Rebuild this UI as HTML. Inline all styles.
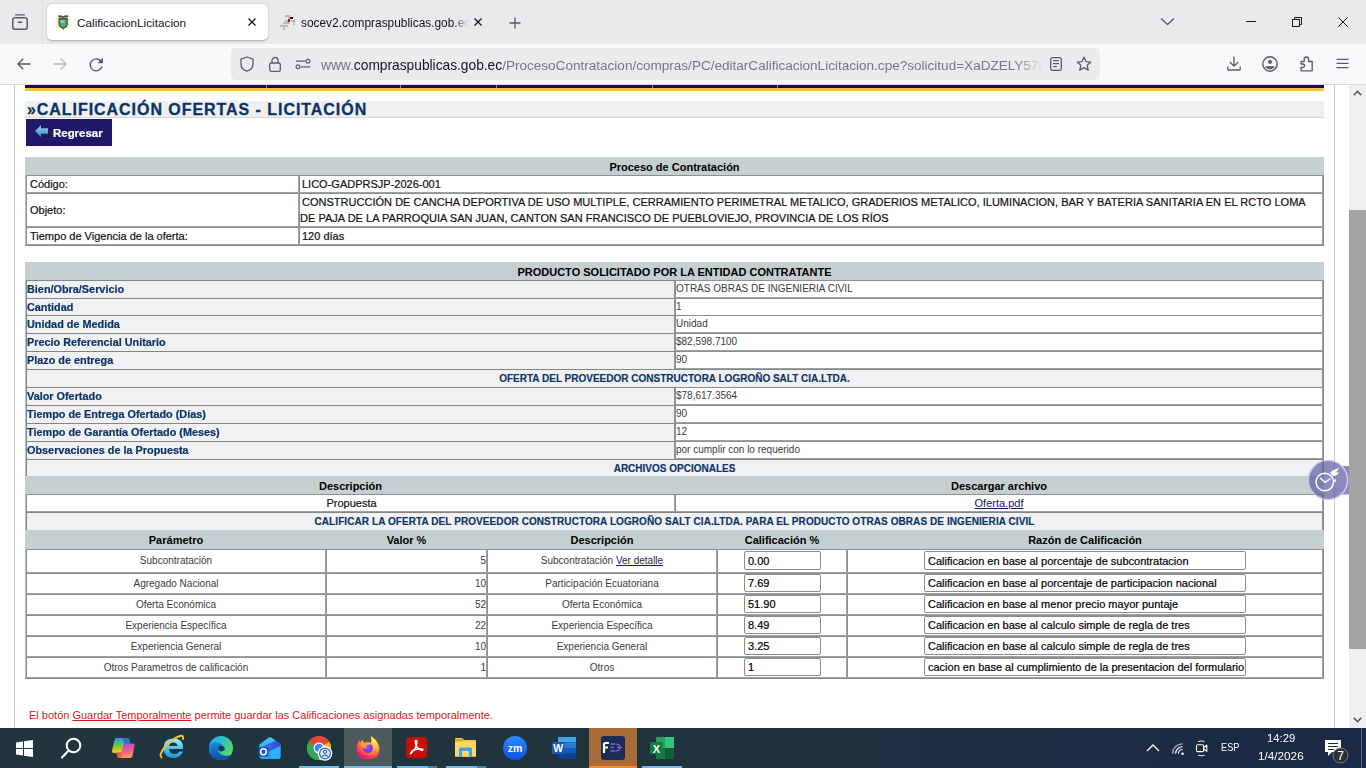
<!DOCTYPE html>
<html><head><meta charset="utf-8"><title>CalificacionLicitacion</title><style>*{margin:0;padding:0;box-sizing:border-box}
html,body{width:1366px;height:768px;overflow:hidden;background:#fff;font-family:"Liberation Sans",sans-serif;position:relative}
.a{position:absolute}
.t{white-space:nowrap}
svg{position:absolute;overflow:visible}
</style></head><body>
<div class="a" style="left:0px;top:0px;width:1366px;height:44px;background:#eaeaed"></div>
<div class="a" style="left:0px;top:44px;width:1366px;height:40px;background:#f9f9fb"></div>
<div class="a" style="left:0px;top:84px;width:1366px;height:1px;background:#d9d9dd"></div>
<div class="a" style="left:42px;top:0px;width:1px;height:44px;background:#dcdce0"></div>
<svg style="left:12px;top:13px" width="16" height="17" viewBox="0 0 16 17"><path d="M3.5 1.8h9" stroke="#5b5b66" stroke-width="1.3" fill="none" stroke-linecap="round"/><rect x="0.8" y="4.8" width="14.4" height="11.4" rx="2.2" stroke="#5b5b66" stroke-width="1.5" fill="none"/><path d="M6.3 9.2h3.4" stroke="#5b5b66" stroke-width="1.4" stroke-linecap="round"/></svg>
<div class="a" style="left:47px;top:4px;width:221px;height:36px;background:#fff;border-radius:5px;box-shadow:0 0.5px 2px rgba(0,0,0,.28)"></div>
<svg style="left:54px;top:10px" width="24" height="24" viewBox="54 10 24 24">
<rect x="56" y="17.5" width="14" height="11" rx="3" fill="#f6f0a0" opacity="0.75"/>
<path d="M57.5 16Q60 14.5 63 16.5Q66 14.5 68.8 16L67 17.5H59.5Z" fill="#4a4a4a"/>
<path d="M62.2 16.5H63.8V19H62.2Z" fill="#6a5030"/>
<path d="M58.5 19Q58.5 18 59.5 18H66.8Q67.8 18 67.8 19V24Q67.8 27.5 63.2 28.8Q58.5 27.5 58.5 24Z" fill="#5a4a2a"/>
<path d="M59.8 19.5H66.5V23.8Q66.5 26.5 63.2 27.5Q59.8 26.5 59.8 23.8Z" fill="#3fae9a"/>
<ellipse cx="62.5" cy="21.5" rx="2" ry="1.5" fill="#9ad8e0" opacity="0.8"/>
<path d="M62 28H64.5L63.2 30Z" fill="#a04a2a"/>
</svg>
<div class="a t " style="left:77px;top:14px;font-size:11.75px;color:#15141a;line-height:18px">CalificacionLicitacion</div>
<svg style="left:248px;top:18px" width="8" height="8" viewBox="0 0 8 8"><path d="M0.5 0.5L7.5 7.5M7.5 0.5L0.5 7.5" stroke="#15141a" stroke-width="1.3"/></svg>
<svg style="left:276px;top:10px" width="24" height="24" viewBox="276 10 24 24" shape-rendering="crispEdges">
<rect x="290" y="15" width="5" height="3" fill="#ece6b4"/>
<rect x="285" y="15" width="5" height="2" fill="#b9b9bb"/>
<rect x="290" y="17" width="3" height="2" fill="#1c1c38"/>
<rect x="288" y="17" width="2" height="2" fill="#b9b9bb"/>
<rect x="288" y="19" width="2" height="3" fill="#d00014"/>
<rect x="291" y="20" width="4" height="2" fill="#b9bdbd"/><rect x="293" y="20" width="2" height="5" fill="#b9bdbd"/>
<rect x="285" y="20" width="3" height="2" fill="#b9b9bb"/>
<rect x="283" y="22" width="7" height="2" fill="#b9b9bb"/>
<rect x="280" y="25" width="8" height="2" fill="#bdbdbd"/>
<rect x="283" y="27" width="2" height="3" fill="#bdbdbd"/>
</svg>
<div class="a t" style="left:301px;top:14px;width:168px;height:18px;overflow:hidden;font-size:11.9px;color:#15141a;line-height:18px;white-space:nowrap;-webkit-mask-image:linear-gradient(90deg,#000 90%,transparent)">socev2.compraspublicas.gob.ec/ProcesoContratacion</div>
<svg style="left:474px;top:18px" width="8" height="8" viewBox="0 0 8 8"><path d="M0.5 0.5L7.5 7.5M7.5 0.5L0.5 7.5" stroke="#15141a" stroke-width="1.3"/></svg>
<svg style="left:509px;top:17px" width="12" height="12" viewBox="0 0 12 12"><path d="M6 0.5V11.5M0.5 6H11.5" stroke="#5b5b66" stroke-width="1.3"/></svg>
<svg style="left:1160px;top:17px" width="15" height="9" viewBox="0 0 15 9"><path d="M1 1.5L7.5 7.5L14 1.5" stroke="#5b5b66" stroke-width="1.4" fill="none"/></svg>
<div class="a" style="left:1246px;top:21px;width:10px;height:1px;background:#1a1a1a"></div>
<svg style="left:1292px;top:17px" width="10" height="10" viewBox="0 0 10 10"><rect x="0.5" y="2.5" width="7" height="7" fill="none" stroke="#1a1a1a" stroke-width="1"/><path d="M2.5 2.5V0.5H9.5V7.5H7.5" fill="none" stroke="#1a1a1a" stroke-width="1"/></svg>
<svg style="left:1338px;top:17px" width="10" height="10" viewBox="0 0 10 10"><path d="M0.3 0.3L9.7 9.7M9.7 0.3L0.3 9.7" stroke="#1a1a1a" stroke-width="1"/></svg>
<svg style="left:17px;top:58px" width="14" height="12" viewBox="0 0 14 12"><path d="M13.5 6H1.2M6.2 0.8L1 6L6.2 11.2" stroke="#5b5b66" stroke-width="1.4" fill="none"/></svg>
<svg style="left:53px;top:58px" width="14" height="12" viewBox="0 0 14 12"><path d="M0.5 6H12.8M7.8 0.8L13 6L7.8 11.2" stroke="#b5b5bc" stroke-width="1.4" fill="none"/></svg>
<svg style="left:89px;top:57px" width="15" height="15" viewBox="0 0 15 15"><path d="M12.6 5.2A6 6 0 1 0 13 9.5" stroke="#5b5b66" stroke-width="1.4" fill="none"/><path d="M14 0.8V6.3H8.5Z" fill="#5b5b66"/></svg>
<div class="a" style="left:231px;top:48px;width:869px;height:32px;background:#ebebee;border-radius:5px"></div>
<svg style="left:240px;top:56px" width="14" height="16" viewBox="0 0 14 16"><path d="M7 1L13 3.2V8.2C13 11.6 10 14.2 7 15.2C4 14.2 1 11.6 1 8.2V3.2Z" stroke="#5b5b66" stroke-width="1.3" fill="none" stroke-linejoin="round"/></svg>
<svg style="left:269px;top:56px" width="12" height="16" viewBox="0 0 12 16"><path d="M3 7V4.5A3 3 0 0 1 9 4.5V7" stroke="#5b5b66" stroke-width="1.3" fill="none"/><rect x="0.7" y="7" width="10.6" height="8.3" rx="1.6" stroke="#5b5b66" stroke-width="1.3" fill="none"/></svg>
<svg style="left:295px;top:59px" width="16" height="10" viewBox="0 0 16 10"><path d="M1 2.2H10.5M6 7.8H15" stroke="#5b5b66" stroke-width="1.3"/><circle cx="13" cy="2.2" r="1.9" stroke="#5b5b66" stroke-width="1.2" fill="none"/><circle cx="3" cy="7.8" r="1.9" stroke="#5b5b66" stroke-width="1.2" fill="none"/></svg>
<div class="a t" style="left:321px;top:56px;width:722px;height:20px;overflow:hidden;font-size:13.75px;line-height:20px;white-space:nowrap;color:#76767c;-webkit-mask-image:linear-gradient(90deg,#000 96%,transparent)">www.<span style="color:#15141a">compraspublicas.gob.ec</span><span style="font-size:13.55px">/ProcesoContratacion/compras/PC/editarCalificacionLicitacion.cpe?solicitud=XaDZELY57lmdQ</span></div>
<svg style="left:1050px;top:57px" width="12" height="14" viewBox="0 0 12 14"><rect x="0.7" y="0.7" width="10.6" height="12.6" rx="1.8" stroke="#5b5b66" stroke-width="1.3" fill="none"/><path d="M3.5 3.6H8.5M3.5 6.6H8.5M3.5 9.6H6.5" stroke="#5b5b66" stroke-width="1.2" stroke-linecap="round"/></svg>
<svg style="left:1076px;top:56px" width="16" height="16" viewBox="0 0 16 16"><path d="M8 1.2L10 5.6L14.8 6.1L11.2 9.3L12.2 14.1L8 11.6L3.8 14.1L4.8 9.3L1.2 6.1L6 5.6Z" stroke="#5b5b66" stroke-width="1.3" fill="none" stroke-linejoin="round"/></svg>
<svg style="left:1227px;top:56px" width="14" height="15" viewBox="0 0 14 15"><path d="M7 0.5V10M2.8 6L7 10.2L11.2 6M0.8 10.5V13.2Q0.8 14 1.6 14H12.4Q13.2 14 13.2 13.2V10.5" stroke="#5b5b66" stroke-width="1.3" fill="none"/></svg>
<svg style="left:1262px;top:56px" width="16" height="16" viewBox="0 0 16 16"><circle cx="8" cy="8" r="7.2" stroke="#5b5b66" stroke-width="1.4" fill="none"/><circle cx="8" cy="6" r="2" fill="#5b5b66"/><path d="M3.6 10.3H12.4V11.6Q10.5 13.4 8 13.4Q5.5 13.4 3.6 11.6Z" fill="#5b5b66"/></svg>
<svg style="left:1300px;top:56px" width="14" height="16" viewBox="0 0 14 16"><path d="M1 5.5H4.2V3.2A2.2 2.2 0 0 1 8.6 3.2V5.5H12.2V14.8H1V11.5H3.2A1.8 1.8 0 0 0 3.2 8H1Z" stroke="#5b5b66" stroke-width="1.3" fill="none" stroke-linejoin="round"/></svg>
<svg style="left:1336px;top:58px" width="13" height="11" viewBox="0 0 13 11"><path d="M0.5 1.4H12.5M0.5 5.4H12.5M0.5 9.6H12.5" stroke="#5b5b66" stroke-width="1.3"/></svg>
<div class="a" style="left:14px;top:85px;width:1px;height:643px;background:#c6c6c6"></div>
<div class="a" style="left:1334px;top:85px;width:1px;height:643px;background:#c6c6c6"></div>
<div class="a" style="left:25px;top:85px;width:1299px;height:3px;background:#170f4f"></div>
<div class="a" style="left:25px;top:88px;width:1299px;height:3px;background:#f5c336"></div>
<div class="a" style="left:266px;top:85px;width:1px;height:3px;background:#8282c8"></div>
<div class="a" style="left:400px;top:85px;width:1px;height:3px;background:#8282c8"></div>
<div class="a" style="left:496px;top:85px;width:1px;height:3px;background:#8282c8"></div>
<div class="a" style="left:652px;top:85px;width:1px;height:3px;background:#8282c8"></div>
<div class="a" style="left:777px;top:85px;width:1px;height:3px;background:#8282c8"></div>
<div class="a" style="left:25px;top:101px;width:1299px;height:17px;background:#f0f0f2;border-bottom:1px solid #d4d4d8"></div>
<div class="a t " style="left:27px;top:100px;font-size:16px;font-weight:bold;color:#0b3463;line-height:20px;letter-spacing:0.95px;white-space:nowrap;-webkit-text-stroke:0.3px #0b3463">&raquo;CALIFICACI&Oacute;N OFERTAS - LICITACI&Oacute;N</div>
<div class="a" style="left:26px;top:119px;width:86px;height:27px;background:#1f1868"></div>
<svg style="left:35px;top:125px" width="13" height="12" viewBox="0 0 13 12"><defs><linearGradient id="ag" x1="0" y1="0" x2="0" y2="1"><stop offset="0" stop-color="#8fd0f0"/><stop offset="1" stop-color="#3b8fc0"/></linearGradient></defs><path d="M0 6L6 0V3.3H13V8.7H6V12Z" fill="url(#ag)"/></svg>
<div class="a t " style="left:53px;top:125px;font-size:10.6px;font-weight:bold;color:#fff;line-height:16px;transform:scaleX(1.08);transform-origin:0 0;-webkit-text-stroke:0.2px #fff">Regresar</div>
<div class="a" style="left:25px;top:157px;width:1299px;height:18px;background:#c5cfcf"></div>
<div class="a t " style="left:25px;top:158px;width:1299px;height:18px;text-align:center;font-size:11px;font-weight:bold;color:#000;line-height:18px;white-space:nowrap">Proceso de Contrataci&oacute;n</div>
<div class="a" style="left:25px;top:175px;width:1px;height:71px;background:#b8c0c0"></div>
<div class="a" style="left:1323px;top:175px;width:1px;height:71px;background:#868c8c"></div>
<div class="a" style="left:25px;top:245px;width:1299px;height:1px;background:#868c8c"></div>
<div class="a" style="left:26px;top:175px;width:273px;height:18px;background:#fff;border:1px solid #8a9191;border-right-color:#9ca2a2;border-bottom-color:#9ca2a2;"></div>
<div class="a" style="left:299px;top:175px;width:1024px;height:18px;background:#fff;border:1px solid #8a9191;border-right-color:#9ca2a2;border-bottom-color:#9ca2a2;"></div>
<div class="a t " style="left:30px;top:175px;height:18px;line-height:18px;font-size:11px;color:#111;white-space:nowrap;-webkit-text-stroke:0.2px #111">C&oacute;digo:</div>
<div class="a t " style="left:302px;top:175px;height:18px;line-height:18px;font-size:11px;color:#111;white-space:nowrap;-webkit-text-stroke:0.2px #111">LICO-GADPRSJP-2026-001</div>
<div class="a" style="left:26px;top:193px;width:273px;height:34px;background:#fff;border:1px solid #8a9191;border-right-color:#9ca2a2;border-bottom-color:#9ca2a2;"></div>
<div class="a" style="left:299px;top:193px;width:1024px;height:34px;background:#fff;border:1px solid #8a9191;border-right-color:#9ca2a2;border-bottom-color:#9ca2a2;"></div>
<div class="a t " style="left:30px;top:193px;height:34px;line-height:34px;font-size:11px;color:#111;white-space:nowrap;-webkit-text-stroke:0.2px #111">Objeto:</div>
<div class="a t " style="left:300px;top:194px;width:1020px;text-indent:2px;line-height:16px;font-size:11px;color:#111;white-space:normal;letter-spacing:0.02px;-webkit-text-stroke:0.2px #111">CONSTRUCCI&Oacute;N DE CANCHA DEPORTIVA DE USO MULTIPLE, CERRAMIENTO PERIMETRAL METALICO, GRADERIOS METALICO, ILUMINACION, BAR Y BATERIA SANITARIA EN EL RCTO LOMA DE PAJA DE LA PARROQUIA SAN JUAN, CANTON SAN FRANCISCO DE PUEBLOVIEJO, PROVINCIA DE LOS R&Iacute;OS</div>
<div class="a" style="left:26px;top:227px;width:273px;height:18px;background:#fff;border:1px solid #8a9191;border-right-color:#9ca2a2;border-bottom-color:#9ca2a2;"></div>
<div class="a" style="left:299px;top:227px;width:1024px;height:18px;background:#fff;border:1px solid #8a9191;border-right-color:#9ca2a2;border-bottom-color:#9ca2a2;"></div>
<div class="a t " style="left:30px;top:227px;height:18px;line-height:18px;font-size:11px;color:#111;white-space:nowrap;-webkit-text-stroke:0.2px #111">Tiempo de Vigencia de la oferta:</div>
<div class="a t " style="left:302px;top:227px;height:18px;line-height:18px;font-size:11px;color:#111;white-space:nowrap;-webkit-text-stroke:0.2px #111">120 d&iacute;as</div>
<div class="a" style="left:25px;top:262px;width:1299px;height:18px;background:#c5cfcf"></div>
<div class="a t " style="left:25px;top:263px;width:1299px;height:18px;text-align:center;font-size:11px;font-weight:bold;color:#000;line-height:18px;white-space:nowrap">PRODUCTO SOLICITADO POR LA ENTIDAD CONTRATANTE</div>
<div class="a" style="left:25px;top:280px;width:1px;height:399px;background:#b8c0c0"></div>
<div class="a" style="left:1323px;top:280px;width:1px;height:399px;background:#868c8c"></div>
<div class="a" style="left:26px;top:280px;width:649px;height:18px;background:#f1f1f3;border-top:1px solid #7f8787;border-left:1px solid #7f8787;border-right:1px solid #8f9393"></div>
<div class="a" style="left:675px;top:280px;width:648px;height:18px;background:#fff;border:1px solid #8a9191;border-right-color:#9ca2a2;border-bottom-color:#9ca2a2;"></div>
<div class="a t " style="left:27px;top:280px;height:18px;line-height:19px;font-size:10.2px;font-weight:bold;color:#0b3468;white-space:nowrap;transform:scaleX(1.065);transform-origin:0 0;-webkit-text-stroke:0.2px #0b3468">Bien/Obra/Servicio</div>
<div class="a t " style="left:676px;top:280px;height:18px;line-height:18px;font-size:10px;color:#3b3b3b;white-space:nowrap">OTRAS OBRAS DE INGENIERIA CIVIL</div>
<div class="a" style="left:26px;top:298px;width:649px;height:18px;background:#f1f1f3;border-top:1px solid #7f8787;border-left:1px solid #7f8787;border-right:1px solid #8f9393"></div>
<div class="a" style="left:675px;top:298px;width:648px;height:18px;background:#fff;border:1px solid #8a9191;border-right-color:#9ca2a2;border-bottom-color:#9ca2a2;"></div>
<div class="a t " style="left:27px;top:298px;height:18px;line-height:19px;font-size:10.2px;font-weight:bold;color:#0b3468;white-space:nowrap;transform:scaleX(1.065);transform-origin:0 0;-webkit-text-stroke:0.2px #0b3468">Cantidad</div>
<div class="a t " style="left:676px;top:298px;height:18px;line-height:18px;font-size:10px;color:#3b3b3b;white-space:nowrap">1</div>
<div class="a" style="left:26px;top:315px;width:649px;height:18px;background:#f1f1f3;border-top:1px solid #7f8787;border-left:1px solid #7f8787;border-right:1px solid #8f9393"></div>
<div class="a" style="left:675px;top:315px;width:648px;height:18px;background:#fff;border:1px solid #8a9191;border-right-color:#9ca2a2;border-bottom-color:#9ca2a2;"></div>
<div class="a t " style="left:27px;top:315px;height:18px;line-height:19px;font-size:10.2px;font-weight:bold;color:#0b3468;white-space:nowrap;transform:scaleX(1.065);transform-origin:0 0;-webkit-text-stroke:0.2px #0b3468">Unidad de Medida</div>
<div class="a t " style="left:676px;top:315px;height:18px;line-height:18px;font-size:10px;color:#3b3b3b;white-space:nowrap">Unidad</div>
<div class="a" style="left:26px;top:333px;width:649px;height:18px;background:#f1f1f3;border-top:1px solid #7f8787;border-left:1px solid #7f8787;border-right:1px solid #8f9393"></div>
<div class="a" style="left:675px;top:333px;width:648px;height:18px;background:#fff;border:1px solid #8a9191;border-right-color:#9ca2a2;border-bottom-color:#9ca2a2;"></div>
<div class="a t " style="left:27px;top:333px;height:18px;line-height:19px;font-size:10.2px;font-weight:bold;color:#0b3468;white-space:nowrap;transform:scaleX(1.065);transform-origin:0 0;-webkit-text-stroke:0.2px #0b3468">Precio Referencial Unitario</div>
<div class="a t " style="left:676px;top:333px;height:18px;line-height:18px;font-size:10px;color:#3b3b3b;white-space:nowrap">$82,598.7100</div>
<div class="a" style="left:26px;top:351px;width:649px;height:18px;background:#f1f1f3;border-top:1px solid #7f8787;border-left:1px solid #7f8787;border-right:1px solid #8f9393"></div>
<div class="a" style="left:675px;top:351px;width:648px;height:18px;background:#fff;border:1px solid #8a9191;border-right-color:#9ca2a2;border-bottom-color:#9ca2a2;"></div>
<div class="a t " style="left:27px;top:351px;height:18px;line-height:19px;font-size:10.2px;font-weight:bold;color:#0b3468;white-space:nowrap;transform:scaleX(1.065);transform-origin:0 0;-webkit-text-stroke:0.2px #0b3468">Plazo de entrega</div>
<div class="a t " style="left:676px;top:351px;height:18px;line-height:18px;font-size:10px;color:#3b3b3b;white-space:nowrap">90</div>
<div class="a" style="left:26px;top:369px;width:1297px;height:18px;background:#f1f1f3;border-top:1px solid #7f8787;border-left:1px solid #7f8787;border-right:1px solid #8f9393"></div>
<div class="a t " style="left:26px;top:370px;width:1297px;height:17px;line-height:17px;text-align:center;font-size:10px;font-weight:bold;color:#0b3468;white-space:nowrap;letter-spacing:0px;-webkit-text-stroke:0.15px #0b3468">OFERTA DEL PROVEEDOR CONSTRUCTORA LOGRO&Ntilde;O SALT CIA.LTDA.</div>
<div class="a" style="left:26px;top:387px;width:649px;height:18px;background:#f1f1f3;border-top:1px solid #7f8787;border-left:1px solid #7f8787;border-right:1px solid #8f9393"></div>
<div class="a" style="left:675px;top:387px;width:648px;height:18px;background:#fff;border:1px solid #8a9191;border-right-color:#9ca2a2;border-bottom-color:#9ca2a2;"></div>
<div class="a t " style="left:27px;top:387px;height:18px;line-height:19px;font-size:10.2px;font-weight:bold;color:#0b3468;white-space:nowrap;transform:scaleX(1.065);transform-origin:0 0;-webkit-text-stroke:0.2px #0b3468">Valor Ofertado</div>
<div class="a t " style="left:676px;top:387px;height:18px;line-height:18px;font-size:10px;color:#3b3b3b;white-space:nowrap">$78,617.3564</div>
<div class="a" style="left:26px;top:405px;width:649px;height:18px;background:#f1f1f3;border-top:1px solid #7f8787;border-left:1px solid #7f8787;border-right:1px solid #8f9393"></div>
<div class="a" style="left:675px;top:405px;width:648px;height:18px;background:#fff;border:1px solid #8a9191;border-right-color:#9ca2a2;border-bottom-color:#9ca2a2;"></div>
<div class="a t " style="left:27px;top:405px;height:18px;line-height:19px;font-size:10.2px;font-weight:bold;color:#0b3468;white-space:nowrap;transform:scaleX(1.065);transform-origin:0 0;-webkit-text-stroke:0.2px #0b3468">Tiempo de Entrega Ofertado (D&iacute;as)</div>
<div class="a t " style="left:676px;top:405px;height:18px;line-height:18px;font-size:10px;color:#3b3b3b;white-space:nowrap">90</div>
<div class="a" style="left:26px;top:423px;width:649px;height:18px;background:#f1f1f3;border-top:1px solid #7f8787;border-left:1px solid #7f8787;border-right:1px solid #8f9393"></div>
<div class="a" style="left:675px;top:423px;width:648px;height:18px;background:#fff;border:1px solid #8a9191;border-right-color:#9ca2a2;border-bottom-color:#9ca2a2;"></div>
<div class="a t " style="left:27px;top:423px;height:18px;line-height:19px;font-size:10.2px;font-weight:bold;color:#0b3468;white-space:nowrap;transform:scaleX(1.065);transform-origin:0 0;-webkit-text-stroke:0.2px #0b3468">Tiempo de Garant&iacute;a Ofertado (Meses)</div>
<div class="a t " style="left:676px;top:423px;height:18px;line-height:18px;font-size:10px;color:#3b3b3b;white-space:nowrap">12</div>
<div class="a" style="left:26px;top:441px;width:649px;height:18px;background:#f1f1f3;border-top:1px solid #7f8787;border-left:1px solid #7f8787;border-right:1px solid #8f9393"></div>
<div class="a" style="left:675px;top:441px;width:648px;height:18px;background:#fff;border:1px solid #8a9191;border-right-color:#9ca2a2;border-bottom-color:#9ca2a2;"></div>
<div class="a t " style="left:27px;top:441px;height:18px;line-height:19px;font-size:10.2px;font-weight:bold;color:#0b3468;white-space:nowrap;transform:scaleX(1.065);transform-origin:0 0;-webkit-text-stroke:0.2px #0b3468">Observaciones de la Propuesta</div>
<div class="a t " style="left:676px;top:441px;height:18px;line-height:18px;font-size:10px;color:#3b3b3b;white-space:nowrap">por cumplir con lo requerido</div>
<div class="a" style="left:26px;top:459px;width:1297px;height:17px;background:#f1f1f3;border-top:1px solid #7f8787;border-left:1px solid #7f8787;border-right:1px solid #8f9393"></div>
<div class="a t " style="left:26px;top:460px;width:1297px;height:16px;line-height:17px;text-align:center;font-size:10px;font-weight:bold;color:#0b3468;white-space:nowrap;letter-spacing:0px;-webkit-text-stroke:0.15px #0b3468">ARCHIVOS OPCIONALES</div>
<div class="a" style="left:25px;top:476px;width:1299px;height:18px;background:#c5cfcf"></div>
<div class="a t " style="left:26px;top:477px;width:649px;height:18px;line-height:18px;text-align:center;font-size:11px;font-weight:bold;color:#000">Descripci&oacute;n</div>
<div class="a t " style="left:675px;top:477px;width:648px;height:18px;line-height:18px;text-align:center;font-size:11px;font-weight:bold;color:#000">Descargar archivo</div>
<div class="a" style="left:26px;top:494px;width:649px;height:18px;background:#fff;border:1px solid #8a9191;border-right-color:#9ca2a2;border-bottom-color:#9ca2a2;"></div>
<div class="a" style="left:675px;top:494px;width:648px;height:18px;background:#fff;border:1px solid #8a9191;border-right-color:#9ca2a2;border-bottom-color:#9ca2a2;"></div>
<div class="a t " style="left:27px;top:494px;width:649px;height:18px;line-height:18px;text-align:center;font-size:11px;color:#111;-webkit-text-stroke:0.2px #111">Propuesta</div>
<div class="a t " style="left:675px;top:494px;width:648px;height:18px;line-height:18px;text-align:center;font-size:11px;color:#16165a"><span style="text-decoration:underline">Oferta.pdf</span></div>
<div class="a" style="left:26px;top:512px;width:1297px;height:18px;background:#f1f1f3;border-top:1px solid #7f8787;border-left:1px solid #7f8787;border-right:1px solid #8f9393"></div>
<div class="a t " style="left:26px;top:513px;width:1297px;height:17px;line-height:17px;text-align:center;font-size:10px;font-weight:bold;color:#0b3468;white-space:nowrap;letter-spacing:0.08px;-webkit-text-stroke:0.15px #0b3468">CALIFICAR LA OFERTA DEL PROVEEDOR CONSTRUCTORA LOGRO&Ntilde;O SALT CIA.LTDA. PARA EL PRODUCTO OTRAS OBRAS DE INGENIERIA CIVIL</div>
<div class="a" style="left:25px;top:530px;width:1299px;height:19px;background:#c5cfcf"></div>
<div class="a t " style="left:26px;top:531px;width:300px;height:19px;line-height:19px;text-align:center;font-size:11px;font-weight:bold;color:#000">Par&aacute;metro</div>
<div class="a t " style="left:326px;top:531px;width:161px;height:19px;line-height:19px;text-align:center;font-size:11px;font-weight:bold;color:#000">Valor %</div>
<div class="a t " style="left:487px;top:531px;width:230px;height:19px;line-height:19px;text-align:center;font-size:11px;font-weight:bold;color:#000">Descripci&oacute;n</div>
<div class="a t " style="left:717px;top:531px;width:130px;height:19px;line-height:19px;text-align:center;font-size:11px;font-weight:bold;color:#000">Calificaci&oacute;n %</div>
<div class="a t " style="left:847px;top:531px;width:476px;height:19px;line-height:19px;text-align:center;font-size:11px;font-weight:bold;color:#000">Raz&oacute;n de Calificaci&oacute;n</div>
<div class="a" style="left:26px;top:549px;width:300px;height:24px;background:#fff;border:1px solid #8a9191;border-right-color:#9ca2a2;border-bottom-color:#9ca2a2;"></div>
<div class="a" style="left:326px;top:549px;width:161px;height:24px;background:#fff;border:1px solid #8a9191;border-right-color:#9ca2a2;border-bottom-color:#9ca2a2;"></div>
<div class="a" style="left:487px;top:549px;width:230px;height:24px;background:#fff;border:1px solid #8a9191;border-right-color:#9ca2a2;border-bottom-color:#9ca2a2;"></div>
<div class="a" style="left:717px;top:549px;width:130px;height:24px;background:#fff;border:1px solid #8a9191;border-right-color:#9ca2a2;border-bottom-color:#9ca2a2;"></div>
<div class="a" style="left:847px;top:549px;width:476px;height:24px;background:#fff;border:1px solid #8a9191;border-right-color:#9ca2a2;border-bottom-color:#9ca2a2;"></div>
<div class="a t " style="left:26px;top:549px;width:300px;height:24px;line-height:24px;text-align:center;font-size:10px;color:#3b3b3b;white-space:nowrap">Subcontrataci&oacute;n</div>
<div class="a t " style="left:326px;top:549px;width:160px;height:24px;line-height:24px;text-align:right;font-size:10px;color:#3b3b3b;white-space:nowrap">5</div>
<div class="a t " style="left:487px;top:549px;width:230px;height:24px;line-height:24px;text-align:center;font-size:10px;color:#3b3b3b;white-space:nowrap">Subcontrataci&oacute;n <span style="color:#1c1c6c;text-decoration:underline">Ver detalle</span></div>
<div class="a" style="left:744px;top:551px;width:77px;height:19px;background:#fff;border:1px solid #8b8b90;border-radius:2px"></div>
<div class="a t " style="left:748px;top:552px;height:18px;line-height:18px;font-size:11px;color:#000;white-space:nowrap;-webkit-text-stroke:0.2px #000">0.00</div>
<div class="a" style="left:924px;top:551px;width:322px;height:19px;background:#fff;border:1px solid #8b8b90;border-radius:2px"></div>
<div class="a t " style="left:928px;top:552px;height:18px;line-height:18px;font-size:11px;color:#000;white-space:nowrap;-webkit-text-stroke:0.2px #000">Calificacion en base al porcentaje de subcontratacion</div>
<div class="a" style="left:26px;top:573px;width:300px;height:21px;background:#fff;border:1px solid #8a9191;border-right-color:#9ca2a2;border-bottom-color:#9ca2a2;"></div>
<div class="a" style="left:326px;top:573px;width:161px;height:21px;background:#fff;border:1px solid #8a9191;border-right-color:#9ca2a2;border-bottom-color:#9ca2a2;"></div>
<div class="a" style="left:487px;top:573px;width:230px;height:21px;background:#fff;border:1px solid #8a9191;border-right-color:#9ca2a2;border-bottom-color:#9ca2a2;"></div>
<div class="a" style="left:717px;top:573px;width:130px;height:21px;background:#fff;border:1px solid #8a9191;border-right-color:#9ca2a2;border-bottom-color:#9ca2a2;"></div>
<div class="a" style="left:847px;top:573px;width:476px;height:21px;background:#fff;border:1px solid #8a9191;border-right-color:#9ca2a2;border-bottom-color:#9ca2a2;"></div>
<div class="a t " style="left:26px;top:573px;width:300px;height:21px;line-height:21px;text-align:center;font-size:10px;color:#3b3b3b;white-space:nowrap">Agregado Nacional</div>
<div class="a t " style="left:326px;top:573px;width:160px;height:21px;line-height:21px;text-align:right;font-size:10px;color:#3b3b3b;white-space:nowrap">10</div>
<div class="a t " style="left:487px;top:573px;width:230px;height:21px;line-height:21px;text-align:center;font-size:10px;color:#3b3b3b;white-space:nowrap">Participaci&oacute;n Ecuatoriana</div>
<div class="a" style="left:744px;top:574px;width:77px;height:18px;background:#fff;border:1px solid #8b8b90;border-radius:2px"></div>
<div class="a t " style="left:748px;top:574px;height:18px;line-height:18px;font-size:11px;color:#000;white-space:nowrap;-webkit-text-stroke:0.2px #000">7.69</div>
<div class="a" style="left:924px;top:574px;width:322px;height:18px;background:#fff;border:1px solid #8b8b90;border-radius:2px"></div>
<div class="a t " style="left:928px;top:574px;height:18px;line-height:18px;font-size:11px;color:#000;white-space:nowrap;-webkit-text-stroke:0.2px #000">Calificacion en base al porcentaje de participacion nacional</div>
<div class="a" style="left:26px;top:594px;width:300px;height:21px;background:#fff;border:1px solid #8a9191;border-right-color:#9ca2a2;border-bottom-color:#9ca2a2;"></div>
<div class="a" style="left:326px;top:594px;width:161px;height:21px;background:#fff;border:1px solid #8a9191;border-right-color:#9ca2a2;border-bottom-color:#9ca2a2;"></div>
<div class="a" style="left:487px;top:594px;width:230px;height:21px;background:#fff;border:1px solid #8a9191;border-right-color:#9ca2a2;border-bottom-color:#9ca2a2;"></div>
<div class="a" style="left:717px;top:594px;width:130px;height:21px;background:#fff;border:1px solid #8a9191;border-right-color:#9ca2a2;border-bottom-color:#9ca2a2;"></div>
<div class="a" style="left:847px;top:594px;width:476px;height:21px;background:#fff;border:1px solid #8a9191;border-right-color:#9ca2a2;border-bottom-color:#9ca2a2;"></div>
<div class="a t " style="left:26px;top:594px;width:300px;height:21px;line-height:21px;text-align:center;font-size:10px;color:#3b3b3b;white-space:nowrap">Oferta Econ&oacute;mica</div>
<div class="a t " style="left:326px;top:594px;width:160px;height:21px;line-height:21px;text-align:right;font-size:10px;color:#3b3b3b;white-space:nowrap">52</div>
<div class="a t " style="left:487px;top:594px;width:230px;height:21px;line-height:21px;text-align:center;font-size:10px;color:#3b3b3b;white-space:nowrap">Oferta Econ&oacute;mica</div>
<div class="a" style="left:744px;top:595px;width:77px;height:18px;background:#fff;border:1px solid #8b8b90;border-radius:2px"></div>
<div class="a t " style="left:748px;top:595px;height:18px;line-height:18px;font-size:11px;color:#000;white-space:nowrap;-webkit-text-stroke:0.2px #000">51.90</div>
<div class="a" style="left:924px;top:595px;width:322px;height:18px;background:#fff;border:1px solid #8b8b90;border-radius:2px"></div>
<div class="a t " style="left:928px;top:595px;height:18px;line-height:18px;font-size:11px;color:#000;white-space:nowrap;-webkit-text-stroke:0.2px #000">Calificacion en base al menor precio mayor puntaje</div>
<div class="a" style="left:26px;top:615px;width:300px;height:21px;background:#fff;border:1px solid #8a9191;border-right-color:#9ca2a2;border-bottom-color:#9ca2a2;"></div>
<div class="a" style="left:326px;top:615px;width:161px;height:21px;background:#fff;border:1px solid #8a9191;border-right-color:#9ca2a2;border-bottom-color:#9ca2a2;"></div>
<div class="a" style="left:487px;top:615px;width:230px;height:21px;background:#fff;border:1px solid #8a9191;border-right-color:#9ca2a2;border-bottom-color:#9ca2a2;"></div>
<div class="a" style="left:717px;top:615px;width:130px;height:21px;background:#fff;border:1px solid #8a9191;border-right-color:#9ca2a2;border-bottom-color:#9ca2a2;"></div>
<div class="a" style="left:847px;top:615px;width:476px;height:21px;background:#fff;border:1px solid #8a9191;border-right-color:#9ca2a2;border-bottom-color:#9ca2a2;"></div>
<div class="a t " style="left:26px;top:615px;width:300px;height:21px;line-height:21px;text-align:center;font-size:10px;color:#3b3b3b;white-space:nowrap">Experiencia Espec&iacute;fica</div>
<div class="a t " style="left:326px;top:615px;width:160px;height:21px;line-height:21px;text-align:right;font-size:10px;color:#3b3b3b;white-space:nowrap">22</div>
<div class="a t " style="left:487px;top:615px;width:230px;height:21px;line-height:21px;text-align:center;font-size:10px;color:#3b3b3b;white-space:nowrap">Experiencia Espec&iacute;fica</div>
<div class="a" style="left:744px;top:616px;width:77px;height:18px;background:#fff;border:1px solid #8b8b90;border-radius:2px"></div>
<div class="a t " style="left:748px;top:616px;height:18px;line-height:18px;font-size:11px;color:#000;white-space:nowrap;-webkit-text-stroke:0.2px #000">8.49</div>
<div class="a" style="left:924px;top:616px;width:322px;height:18px;background:#fff;border:1px solid #8b8b90;border-radius:2px"></div>
<div class="a t " style="left:928px;top:616px;height:18px;line-height:18px;font-size:11px;color:#000;white-space:nowrap;-webkit-text-stroke:0.2px #000">Calificacion en base al calculo simple de regla de tres</div>
<div class="a" style="left:26px;top:636px;width:300px;height:21px;background:#fff;border:1px solid #8a9191;border-right-color:#9ca2a2;border-bottom-color:#9ca2a2;"></div>
<div class="a" style="left:326px;top:636px;width:161px;height:21px;background:#fff;border:1px solid #8a9191;border-right-color:#9ca2a2;border-bottom-color:#9ca2a2;"></div>
<div class="a" style="left:487px;top:636px;width:230px;height:21px;background:#fff;border:1px solid #8a9191;border-right-color:#9ca2a2;border-bottom-color:#9ca2a2;"></div>
<div class="a" style="left:717px;top:636px;width:130px;height:21px;background:#fff;border:1px solid #8a9191;border-right-color:#9ca2a2;border-bottom-color:#9ca2a2;"></div>
<div class="a" style="left:847px;top:636px;width:476px;height:21px;background:#fff;border:1px solid #8a9191;border-right-color:#9ca2a2;border-bottom-color:#9ca2a2;"></div>
<div class="a t " style="left:26px;top:636px;width:300px;height:21px;line-height:21px;text-align:center;font-size:10px;color:#3b3b3b;white-space:nowrap">Experiencia General</div>
<div class="a t " style="left:326px;top:636px;width:160px;height:21px;line-height:21px;text-align:right;font-size:10px;color:#3b3b3b;white-space:nowrap">10</div>
<div class="a t " style="left:487px;top:636px;width:230px;height:21px;line-height:21px;text-align:center;font-size:10px;color:#3b3b3b;white-space:nowrap">Experiencia General</div>
<div class="a" style="left:744px;top:637px;width:77px;height:18px;background:#fff;border:1px solid #8b8b90;border-radius:2px"></div>
<div class="a t " style="left:748px;top:637px;height:18px;line-height:18px;font-size:11px;color:#000;white-space:nowrap;-webkit-text-stroke:0.2px #000">3.25</div>
<div class="a" style="left:924px;top:637px;width:322px;height:18px;background:#fff;border:1px solid #8b8b90;border-radius:2px"></div>
<div class="a t " style="left:928px;top:637px;height:18px;line-height:18px;font-size:11px;color:#000;white-space:nowrap;-webkit-text-stroke:0.2px #000">Calificacion en base al calculo simple de regla de tres</div>
<div class="a" style="left:26px;top:657px;width:300px;height:21px;background:#fff;border:1px solid #8a9191;border-right-color:#9ca2a2;border-bottom-color:#9ca2a2;"></div>
<div class="a" style="left:326px;top:657px;width:161px;height:21px;background:#fff;border:1px solid #8a9191;border-right-color:#9ca2a2;border-bottom-color:#9ca2a2;"></div>
<div class="a" style="left:487px;top:657px;width:230px;height:21px;background:#fff;border:1px solid #8a9191;border-right-color:#9ca2a2;border-bottom-color:#9ca2a2;"></div>
<div class="a" style="left:717px;top:657px;width:130px;height:21px;background:#fff;border:1px solid #8a9191;border-right-color:#9ca2a2;border-bottom-color:#9ca2a2;"></div>
<div class="a" style="left:847px;top:657px;width:476px;height:21px;background:#fff;border:1px solid #8a9191;border-right-color:#9ca2a2;border-bottom-color:#9ca2a2;"></div>
<div class="a t " style="left:26px;top:657px;width:300px;height:21px;line-height:21px;text-align:center;font-size:10px;color:#3b3b3b;white-space:nowrap">Otros Parametros de calificaci&oacute;n</div>
<div class="a t " style="left:326px;top:657px;width:160px;height:21px;line-height:21px;text-align:right;font-size:10px;color:#3b3b3b;white-space:nowrap">1</div>
<div class="a t " style="left:487px;top:657px;width:230px;height:21px;line-height:21px;text-align:center;font-size:10px;color:#3b3b3b;white-space:nowrap">Otros</div>
<div class="a" style="left:744px;top:658px;width:77px;height:18px;background:#fff;border:1px solid #8b8b90;border-radius:2px"></div>
<div class="a t " style="left:748px;top:658px;height:18px;line-height:18px;font-size:11px;color:#000;white-space:nowrap;-webkit-text-stroke:0.2px #000">1</div>
<div class="a" style="left:924px;top:658px;width:322px;height:18px;background:#fff;border:1px solid #8b8b90;border-radius:2px"></div>
<div class="a t " style="left:928px;top:658px;height:18px;line-height:18px;font-size:11px;color:#000;white-space:nowrap;-webkit-text-stroke:0.2px #000">cacion en base al cumplimiento de la presentacion del formulario</div>
<div class="a" style="left:25px;top:678px;width:1299px;height:1px;background:#868c8c"></div>
<div class="a t " style="left:29px;top:707px;font-size:11px;line-height:16px;color:#d41a1a;white-space:nowrap">El bot&oacute;n <span style="text-decoration:underline">Guardar Temporalmente</span> permite guardar las Calificaciones asignadas temporalmente.</div>
<svg style="left:1300px;top:455px" width="50" height="50" viewBox="0 0 50 50">
<g opacity="0.72"><path d="M27 11H49V39.5H27Z" fill="#5f5fa8"/>
<circle cx="28" cy="25" r="19.6" fill="#5f5fa8" stroke="#c0c0d8" stroke-width="1.4"/></g>
<circle cx="24.8" cy="27" r="8.8" fill="none" stroke="#fff" stroke-width="1.5"/>
<path d="M20.5 23.2L25 27.3L30 24" stroke="#fff" stroke-width="1.4" fill="none" stroke-linecap="round"/>
<path d="M30 17.5Q34 14.5 39 12.8Q38 16 35 17.5Q38 17.2 39 17.5Q37 21 33 21Q31.5 19 30 17.5Z" fill="#fff"/>
<path d="M35.5 23.5Q36.5 25 35 28L34 25.5Z" fill="#fff"/>
</svg>
<div class="a" style="left:1349px;top:85px;width:17px;height:643px;background:#f0f0f0"></div>
<div class="a" style="left:1349px;top:210px;width:17px;height:439px;background:#a3a3a3"></div>
<svg style="left:1353px;top:90px" width="9" height="6" viewBox="0 0 9 6"><path d="M0.8 5.2L4.5 1.3L8.2 5.2" stroke="#505050" stroke-width="1.6" fill="none"/></svg>
<svg style="left:1353px;top:717px" width="9" height="6" viewBox="0 0 9 6"><path d="M0.8 0.8L4.5 4.7L8.2 0.8" stroke="#505050" stroke-width="1.6" fill="none"/></svg>
<div class="a" style="left:0;top:728px;width:1366px;height:40px;background:linear-gradient(90deg,#21353e 0%,#20343d 45%,#1d2d42 75%,#1b2946 100%)"></div>
<div class="a" style="left:344px;top:728px;width:48px;height:40px;background:#4c595d"></div>
<div class="a" style="left:589px;top:728px;width:48px;height:40px;background:#a76a39"></div>
<div class="a" style="left:299px;top:766px;width:40px;height:2px;background:#7ab8e8"></div>
<div class="a" style="left:344px;top:766px;width:48px;height:2px;background:#7ab8e8"></div>
<div class="a" style="left:397px;top:766px;width:31px;height:2px;background:#7ab8e8"></div>
<div class="a" style="left:428px;top:766px;width:9px;height:2px;background:#4f7fa8"></div>
<div class="a" style="left:446px;top:766px;width:31px;height:2px;background:#7ab8e8"></div>
<div class="a" style="left:477px;top:766px;width:9px;height:2px;background:#4f7fa8"></div>
<div class="a" style="left:589px;top:766px;width:48px;height:2px;background:#ff8a14"></div>
<div class="a" style="left:642px;top:766px;width:40px;height:2px;background:#7ab8e8"></div>
<svg style="left:16px;top:740px" width="17" height="17" viewBox="0 0 17 17"><path d="M0 2.4L7 1.4V8H0Z M8 1.2L17 0V8H8Z M0 9H7V15.6L0 14.6Z M8 9H17V17L8 15.8Z" fill="#fff"/></svg>
<svg style="left:61px;top:737px" width="21" height="22" viewBox="0 0 21 22"><circle cx="12.5" cy="8.5" r="6.8" stroke="#fff" stroke-width="2" fill="none"/><path d="M7.6 13.6L1 20.4" stroke="#fff" stroke-width="2.2" stroke-linecap="round"/></svg>
<svg style="left:111px;top:737px" width="24" height="22" viewBox="0 0 24 22"><defs>
<linearGradient id="cp1" x1="0" y1="0" x2="0" y2="1"><stop offset="0" stop-color="#1f9cf0"/><stop offset="0.55" stop-color="#7cc63a"/><stop offset="0.9" stop-color="#f2c614"/></linearGradient>
<linearGradient id="cp2" x1="0.3" y1="0" x2="0.6" y2="1"><stop offset="0" stop-color="#a84ee0"/><stop offset="0.5" stop-color="#ee5a9a"/><stop offset="1" stop-color="#ff9a50"/></linearGradient></defs>
<path d="M5 1H16Q18 1 18.5 3L19 6.5H13.5L11 14.5Q10.5 16 8.5 16H3Q0.5 16 1 13.5L3.5 3Q4 1 5 1Z" fill="url(#cp1)"/>
<path d="M11 1H16Q18 1 18.5 3L19 6.5H13.5Z" fill="#2a6ee0"/>
<path d="M8.5 21H19Q21 21 21.5 19L23.5 8.5Q24 6.5 21.5 6.5H15.5Q13.5 6.5 13 8.5L10.5 15.5H5.5L6 18.5Q6.5 21 8.5 21Z" fill="url(#cp2)"/>
<path d="M5.5 15.5H10.5L9.5 21H8.5Q6.5 21 6 18.5Z" fill="#f05a3a"/>
</svg>
<svg style="left:158px;top:734px" width="28" height="26" viewBox="0 0 28 26"><defs><linearGradient id="ie" x1="0" y1="0" x2="0" y2="1"><stop offset="0" stop-color="#a0ecff"/><stop offset="0.6" stop-color="#3cc0f0"/><stop offset="1" stop-color="#1a90d8"/></linearGradient></defs>
<path d="M25 15H11Q11.5 20 16.5 20Q19.5 20 21.5 17.5H25Q22.5 24 16 24Q6 24 5.5 14.5Q5.5 4.5 15.5 4.5Q25 4.5 25 13.5Z M11 12H19.5Q19 8.5 15.3 8.5Q11.6 8.5 11 12Z" fill="url(#ie)"/>
<path d="M3.5 23.5Q0.5 21 7 13Q15 4 22 2Q26 1 25 5" stroke="#e8c232" stroke-width="2" fill="none" stroke-linecap="round"/>
</svg>
<svg style="left:209px;top:736px" width="24" height="24" viewBox="0 0 24 24"><defs>
<linearGradient id="ed1" x1="0" y1="0" x2="1" y2="0.6"><stop offset="0" stop-color="#2aa8e8"/><stop offset="0.5" stop-color="#30c0c8"/><stop offset="1" stop-color="#5ade58"/></linearGradient>
<linearGradient id="ed2" x1="0" y1="0" x2="0.3" y2="1"><stop offset="0" stop-color="#1a8ee0"/><stop offset="1" stop-color="#0e4fa8"/></linearGradient></defs>
<circle cx="12" cy="12" r="12" fill="url(#ed1)"/>
<path d="M0.3 10.5Q2 6.5 7 6.3Q12 6.3 13 9.5Q9.5 9 9 13Q9 18 15 19.5Q19.5 20.5 22.5 18.5Q19.5 24 12 24Q0 24 0 12Z" fill="url(#ed2)"/>
<path d="M13 9.5Q9.5 9 9.2 12.8Q9.5 15.5 12.5 15.5Q15 15.3 16 13Q15.5 10 13 9.5Z" fill="#143a5a"/>
</svg>
<svg style="left:258px;top:736px" width="24" height="24" viewBox="0 0 24 24"><defs>
<linearGradient id="ol" x1="0" y1="0" x2="0.4" y2="1"><stop offset="0" stop-color="#5cc8ff"/><stop offset="1" stop-color="#1aa0f0"/></linearGradient>
<linearGradient id="ol2" x1="0" y1="0" x2="1" y2="0"><stop offset="0" stop-color="#2a7ae8"/><stop offset="1" stop-color="#3a3ad0"/></linearGradient></defs>
<path d="M1.5 8.5L10 2Q12 0.6 14 2L22.5 8V20.5Q22.5 23 20 23H4Q1.5 23 1.5 20.5Z" fill="url(#ol)"/>
<path d="M3 11L18 4.5L22.5 8V10L9 17Z" fill="url(#ol2)" opacity="0.9"/>
<path d="M12 15L22.5 10V20.5Q22.5 23 20 23H13Z" fill="#30b8f8" opacity="0.7"/>
<rect x="0.5" y="11" width="10" height="9.5" rx="1.8" fill="#1656c4"/>
<ellipse cx="5.5" cy="15.7" rx="2.8" ry="3" fill="none" stroke="#fff" stroke-width="1.5"/>
</svg>
<svg style="left:307px;top:736px" width="26" height="26" viewBox="0 0 26 26">
<circle cx="12" cy="12" r="12" fill="#2ea44f"/>
<path d="M12 12L1.6 6A12 12 0 0 1 22.4 6Z" fill="#ea4335"/>
<path d="M12 12L22.4 6A12 12 0 0 1 12 24Z" fill="#fbbc04"/>
<path d="M12 12L12 24A12 12 0 0 1 1.6 6Z" fill="#34a853"/>
<circle cx="12" cy="12" r="5.5" fill="#fff"/><circle cx="12" cy="12" r="4.3" fill="#4285f4"/>
<circle cx="18" cy="17.5" r="7.3" fill="#fff"/><circle cx="18" cy="17.5" r="6" fill="#2a62c9"/>
<circle cx="18" cy="17.5" r="4.8" fill="#dbe6f8"/>
<circle cx="18" cy="15.8" r="1.6" fill="none" stroke="#2a62c9" stroke-width="1.1"/>
<path d="M15 20.5Q18 17.8 21 20.5" stroke="#2a62c9" stroke-width="1.1" fill="none"/>
</svg>
<svg style="left:356px;top:736px" width="24" height="24" viewBox="0 0 24 24"><defs>
<radialGradient id="ff1" cx="0.7" cy="0.15" r="1"><stop offset="0" stop-color="#fff44f"/><stop offset="0.35" stop-color="#ffbd4f"/><stop offset="0.6" stop-color="#ff7139"/><stop offset="0.85" stop-color="#f5156c"/><stop offset="1" stop-color="#e31587"/></radialGradient>
<radialGradient id="ff2" cx="0.5" cy="0.4" r="0.6"><stop offset="0" stop-color="#9059ff"/><stop offset="1" stop-color="#6e33d8"/></radialGradient></defs>
<path d="M15 0Q22 5 23.5 12Q23.5 23.5 12 23.5Q0.5 23.5 0.5 12Q0.5 7 3.5 4L4.2 6.5L6.5 3.5Q7 6 8.5 7Q12 5.5 15 7Q16.5 3 15 0Z" fill="url(#ff1)"/>
<circle cx="12" cy="12" r="5" fill="url(#ff2)"/>
<path d="M5 9Q8 5.5 13 6.5Q15.5 7 16 9Q13 8 11 9.5Q9.5 11 10 13Q7 12 5 9Z" fill="#ff9a3c"/>
<path d="M15 0Q21 4 22.5 10Q20 6 16 6Z" fill="#ffe14a" opacity="0.8"/>
</svg>
<svg style="left:406px;top:737px" width="22" height="22" viewBox="0 0 22 22"><rect x="0" y="0" width="21" height="21" rx="3.5" fill="#c7100b"/>
<path d="M10 3.5Q11.5 3.5 10.8 7Q10 11 6 15.5Q4 17.5 4.5 16Q6 13 12 12Q17 11.5 17 13Q16.5 14 13.5 12.5Q10 10 9.3 6Q9 3.5 10 3.5Z" stroke="#fff" stroke-width="1.3" fill="none"/>
</svg>
<svg style="left:455px;top:738px" width="22" height="19" viewBox="0 0 22 19">
<path d="M0 1Q0 0 1 0H7L9 2H20Q21 2 21 3V17.5Q21 18.5 20 18.5H1Q0 18.5 0 17.5Z" fill="#f5c84a"/>
<rect x="0" y="1" width="9" height="2" fill="#e0a020"/>
<rect x="0" y="4" width="21" height="14.5" fill="#ffd866"/>
<path d="M4 18.5V11Q4 9.5 5.5 9.5H15.5Q17 9.5 17 11V18.5H14V13H7V18.5Z" fill="#4aa0d8"/>
<rect x="7" y="13" width="7" height="5.5" fill="#ffd866"/>
</svg>
<svg style="left:503px;top:736px" width="24" height="24" viewBox="0 0 24 24"><defs><linearGradient id="zm" x1="0" y1="0" x2="0" y2="1"><stop offset="0" stop-color="#2d8cff"/><stop offset="1" stop-color="#0b50e0"/></linearGradient></defs><circle cx="12" cy="12" r="12" fill="url(#zm)"/>
<text x="12" y="15.5" text-anchor="middle" font-family="Liberation Sans" font-weight="bold" font-size="10.5" fill="#fff">zm</text></svg>
<svg style="left:552px;top:737px" width="25" height="22" viewBox="0 0 25 22">
<rect x="6" y="0" width="18" height="5.5" fill="#41a5ee"/><rect x="6" y="5.5" width="18" height="5.5" fill="#2b7cd3"/>
<rect x="6" y="11" width="18" height="5.5" fill="#185abd"/><rect x="6" y="16.5" width="18" height="5.5" fill="#103f91"/>
<rect x="0" y="5" width="12.5" height="12" rx="1" fill="#185abd"/>
<text x="6.3" y="15.3" text-anchor="middle" font-family="Liberation Sans" font-weight="bold" font-size="10.5" fill="#fff" transform="translate(6.3 0) scale(1 1.1) translate(-6.3 -1.3)">W</text></svg>
<svg style="left:601px;top:736px" width="24" height="24" viewBox="0 0 24 24"><rect x="0" y="0" width="24" height="24" rx="3" fill="#1c2c54"/>
<path d="M3 7H8M3 7V17M3 11.5H7" stroke="#fff" stroke-width="2.2" fill="none"/>
<path d="M9.5 8H14M9.5 11.5H13M9.5 15H14" stroke="#6a6ad0" stroke-width="1.3"/>
<path d="M14.5 8Q19 8 19 11.5Q19 15 14.5 15M17 11.5H21.5" stroke="#7a6ad8" stroke-width="1.2" fill="none"/>
<circle cx="17" cy="11.5" r="0.9" fill="#e04070"/>
</svg>
<svg style="left:650px;top:737px" width="25" height="22" viewBox="0 0 25 22">
<rect x="6" y="0" width="18" height="22" rx="1" fill="#21a366"/><rect x="15" y="0" width="9" height="11" fill="#33c481"/>
<rect x="6" y="11" width="18" height="11" fill="#107c41"/><rect x="15" y="11" width="9" height="11" fill="#185c37"/>
<rect x="0" y="5" width="12.5" height="12" rx="1" fill="#107c41"/>
<text x="6.3" y="15.5" text-anchor="middle" font-family="Liberation Sans" font-weight="bold" font-size="11" fill="#fff">X</text></svg>
<svg style="left:1146px;top:744px" width="14" height="8" viewBox="0 0 14 8"><path d="M1 7L7 1L13 7" stroke="#fff" stroke-width="1.3" fill="none"/></svg>
<svg style="left:1171px;top:742px" width="14" height="14" viewBox="0 0 14 14">
<path d="M7.4 11.7A4.2 4.2 0 0 1 11.6 7.5M4.6 11.7A7 7 0 0 1 11.6 4.7M1.6 11.7A10 10 0 0 1 11.6 1.7" stroke="#fff" stroke-width="1.1" fill="none"/>
<path d="M1.6 11.7A10 10 0 0 1 11.6 1.7" stroke="#1b2946" stroke-width="1.2" fill="none" opacity="0.35"/>
<circle cx="11.6" cy="11.7" r="1.3" fill="#fff"/></svg>
<svg style="left:1195px;top:740px" width="13" height="17" viewBox="0 0 13 17">
<path d="M3.2 1.6Q6.5 0.2 9.5 1.6M3.2 15.2Q6.5 16.6 9.5 15.2" stroke="#fff" stroke-width="1" fill="none"/>
<rect x="1.5" y="4.8" width="7.2" height="6.8" rx="1.4" stroke="#fff" stroke-width="1.1" fill="#2a2a35"/>
<path d="M8.7 7.5L11.8 5.2V11.2L8.7 9" stroke="#fff" stroke-width="1.1" fill="none" stroke-linejoin="round"/></svg>
<div class="a t" style="left:1221px;top:739px;font-size:11.5px;line-height:16px;color:#fff;transform:scaleX(0.8);transform-origin:0 0">ESP</div>
<div class="a t" style="left:1267px;top:730px;font-size:11.5px;line-height:16px;color:#fff;transform:scaleX(0.98);transform-origin:0 0">14:29</div>
<div class="a t" style="left:1258px;top:748px;font-size:11.5px;line-height:16px;color:#fff;transform:scaleX(1.02);transform-origin:0 0">1/4/2026</div>
<svg style="left:1324px;top:739px" width="26" height="26" viewBox="0 0 26 26">
<path d="M1 1H17V13H8L4 17V13H1Z" fill="#fff"/><path d="M4 4.5H14M4 7.5H14M4 10.5H10" stroke="#111" stroke-width="0.9"/>
<circle cx="16.5" cy="16.5" r="7.5" fill="#2b2f38" stroke="#7a7f88" stroke-width="1"/>
<text x="16.5" y="21" text-anchor="middle" font-family="Liberation Sans" font-size="12" fill="#fff">7</text></svg>
<div class="a" style="left:1361px;top:728px;width:1px;height:40px;background:#5a6478"></div>
</body></html>
